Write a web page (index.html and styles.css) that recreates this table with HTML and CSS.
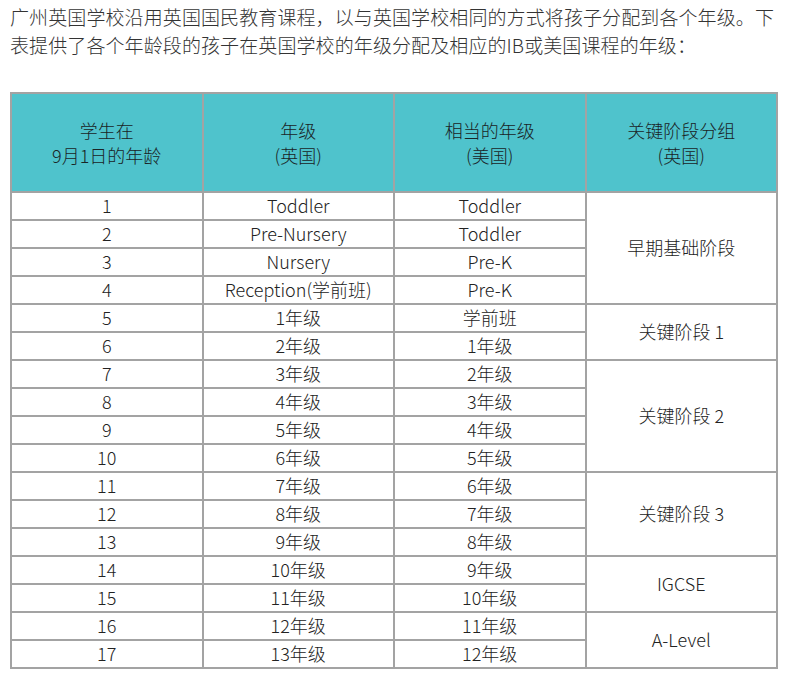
FILE: index.html
```html
<!DOCTYPE html>
<html lang="zh">
<head>
<meta charset="utf-8">
<link rel="stylesheet" href="styles.css">
</head>
<body>
<p class="intro">广州英国学校沿用英国国民教育课程，以与英国学校相同的方式将孩子分配到各个年级。下表提供了各个年龄段的孩子在英国学校的年级分配及相应的IB或美国课程的年级：</p>
<table class="grades">
<thead>
<tr><th>学生在<br>9月1日的年龄</th><th>年级<br>(英国)</th><th>相当的年级<br>(美国)</th><th>关键阶段分组<br>(英国)</th></tr>
</thead>
<tbody>
<tr><td>1</td><td>Toddler</td><td>Toddler</td><td rowspan="4">早期基础阶段</td></tr>
<tr><td>2</td><td>Pre-Nursery</td><td>Toddler</td></tr>
<tr><td>3</td><td>Nursery</td><td>Pre-K</td></tr>
<tr><td>4</td><td>Reception(学前班)</td><td>Pre-K</td></tr>
<tr><td>5</td><td>1年级</td><td>学前班</td><td rowspan="2">关键阶段 1</td></tr>
<tr><td>6</td><td>2年级</td><td>1年级</td></tr>
<tr><td>7</td><td>3年级</td><td>2年级</td><td rowspan="4">关键阶段 2</td></tr>
<tr><td>8</td><td>4年级</td><td>3年级</td></tr>
<tr><td>9</td><td>5年级</td><td>4年级</td></tr>
<tr><td>10</td><td>6年级</td><td>5年级</td></tr>
<tr><td>11</td><td>7年级</td><td>6年级</td><td rowspan="3">关键阶段 3</td></tr>
<tr><td>12</td><td>8年级</td><td>7年级</td></tr>
<tr><td>13</td><td>9年级</td><td>8年级</td></tr>
<tr><td>14</td><td>10年级</td><td>9年级</td><td rowspan="2">IGCSE</td></tr>
<tr><td>15</td><td>11年级</td><td>10年级</td></tr>
<tr><td>16</td><td>12年级</td><td>11年级</td><td rowspan="2">A-Level</td></tr>
<tr><td>17</td><td>13年级</td><td>12年级</td></tr>
</tbody>
</table>
</body>
</html>
```
FILE: styles.css
```css
html, body {
  margin: 0;
  padding: 0;
  background: #ffffff;
}
body {
  padding: 3px 10px 0 10px;
  font-family: "Noto Sans CJK SC", "Noto Sans", sans-serif;
  font-weight: 300;
  color: #333333;
}
.intro {
  margin: 0 0 33px 0;
  font-size: 19px;
  line-height: 28px;
  letter-spacing: 0.1px;
}
.grades {
  width: 768px;
  border-collapse: collapse;
  table-layout: fixed;
  border: 2px solid #a3a3a3;
}
.grades th,
.grades td {
  border: 2px solid #a3a3a3;
  text-align: center;
  vertical-align: middle;
  padding: 0;
}
.grades th {
  background: #4fc3cc;
  color: #1a2426;
  font-weight: 300;
  font-size: 18px;
  line-height: 25px;
  height: 97px;
}
.grades td {
  font-size: 18px;
  font-weight: 300;
  height: 24px;
  line-height: 24px;
  padding-bottom: 2px;
  color: #222222;
}
```
